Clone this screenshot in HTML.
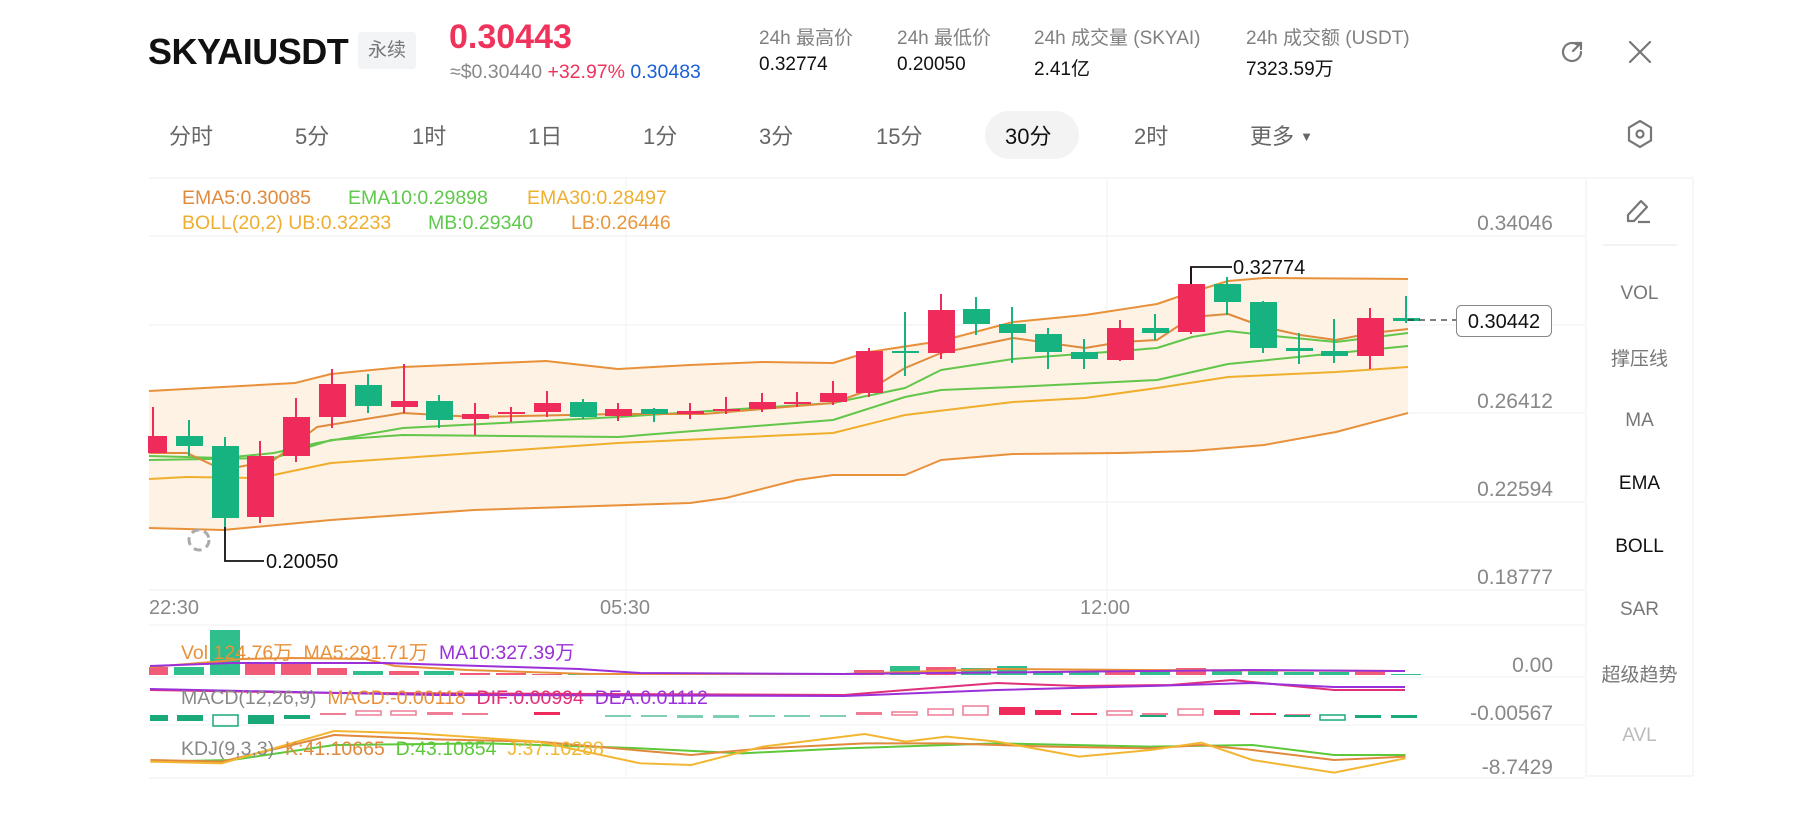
<!DOCTYPE html>
<html><head><meta charset="utf-8"><style>
*{margin:0;padding:0;box-sizing:border-box}
body{width:1796px;height:828px;background:#fff;position:relative;overflow:hidden;font-family:"Liberation Sans","Noto Sans CJK SC",sans-serif;color:#111}
.a{position:absolute;white-space:nowrap}
.lab{font-size:19px;color:#808080}
.val{font-size:19px;color:#111}
.tab{font-size:22px;color:#666;top:119px}
.rp{left:1586px;width:107px;text-align:center;font-size:19px;color:#777}
.ax{right:243px;font-size:21px;color:#888;text-align:right}
.lg{font-size:19.5px}
</style></head><body>
<div class="a" style="left:148px;top:31px;font-size:36px;font-weight:bold;letter-spacing:-0.5px">SKYAIUSDT</div>
<div class="a" style="left:358px;top:32px;width:58px;height:37px;background:#f3f4f6;border-radius:3px;font-size:19px;color:#777;text-align:center;line-height:37px">永续</div>
<div class="a" style="left:449px;top:18px;font-size:34px;font-weight:bold;color:#f0335c">0.30443</div>
<div class="a" style="left:450px;top:61px;font-size:19.5px;color:#888">≈$0.30440 <span style="color:#f0335c">+32.97%</span> <span style="color:#1a5ed8">0.30483</span></div>
<div class="a lab" style="left:759px;top:23px">24h 最高价</div><div class="a val" style="left:759px;top:54px">0.32774</div>
<div class="a lab" style="left:897px;top:23px">24h 最低价</div><div class="a val" style="left:897px;top:54px">0.20050</div>
<div class="a lab" style="left:1034px;top:23px">24h 成交量 (SKYAI)</div><div class="a val" style="left:1034px;top:54px">2.41亿</div>
<div class="a lab" style="left:1246px;top:23px">24h 成交额 (USDT)</div><div class="a val" style="left:1246px;top:54px">7323.59万</div>
<svg class="a" style="left:1558px;top:38px" width="28" height="28" viewBox="0 0 28 28" fill="none" stroke="#777" stroke-width="2.2" stroke-linecap="round"><path d="M23 14a9 9 0 1 1-4-7.5"/><path d="M15 13l8-8M17 5h6v6"/></svg>
<svg class="a" style="left:1627px;top:39px" width="26" height="26" viewBox="0 0 26 26" stroke="#777" stroke-width="2.2" stroke-linecap="round"><path d="M3 3l20 20M23 3L3 23"/></svg>
<div class="a tab" style="left:169px">分时</div>
<div class="a tab" style="left:295px">5分</div>
<div class="a tab" style="left:412px">1时</div>
<div class="a tab" style="left:528px">1日</div>
<div class="a tab" style="left:643px">1分</div>
<div class="a tab" style="left:759px">3分</div>
<div class="a tab" style="left:876px">15分</div>
<div class="a" style="left:985px;top:111px;width:94px;height:48px;background:#f3f3f3;border-radius:24px"></div>
<div class="a tab" style="left:1005px;color:#111">30分</div>
<div class="a tab" style="left:1134px">2时</div>
<div class="a tab" style="left:1250px">更多 <span style="font-size:13px;vertical-align:3px">▼</span></div>
<svg class="a" style="left:1624px;top:118px" width="32" height="34" viewBox="0 0 32 34" fill="none" stroke="#777" stroke-width="2.2"><path d="M16 3l11 6.5v13L16 29 5 22.5v-13z"/><circle cx="16" cy="16" r="3.5"/></svg>

<svg class="a" style="left:0;top:0" width="1796" height="828">
<g stroke="#f2f2f2" stroke-width="1.2">
<line x1="149" y1="178" x2="1585" y2="178"/>
<line x1="149" y1="236" x2="1585" y2="236"/><line x1="149" y1="325" x2="1585" y2="325"/><line x1="149" y1="413" x2="1585" y2="413"/><line x1="149" y1="502" x2="1585" y2="502"/><line x1="149" y1="590" x2="1585" y2="590"/>
<line x1="149" y1="625" x2="1585" y2="625"/><line x1="149" y1="677" x2="1585" y2="677"/><line x1="149" y1="725" x2="1585" y2="725"/><line x1="149" y1="778" x2="1585" y2="778"/>
<line x1="626" y1="178" x2="626" y2="778"/><line x1="1107" y1="178" x2="1107" y2="778"/>
</g>
<rect x="1586" y="178" width="107" height="598" fill="none" stroke="#efefef"/>
<line x1="1603" y1="245" x2="1677" y2="245" stroke="#eee" stroke-width="1.5"/>
<polygon fill="#fdf2e4" points="149,391 295,383 331,374 403,367 546,361 618,369 690,365 762,362 833,363 869,352 941,341 1013,322 1085,315 1157,304 1192,292 1228,281 1264,278 1408,279 1408,413 1336,432 1264,445 1192,451 1120,453 1013,454 941,460 905,475 833,475 797,480 726,498 690,503 474,510 331,520 223,530 149,528"/>
<g fill="none" stroke-width="2" stroke-linejoin="round">
<polyline stroke="#e8913a" points="149,391 295,383 331,374 403,367 546,361 618,369 690,365 762,362 833,363 869,352 941,341 1013,322 1085,315 1157,304 1192,292 1228,281 1264,278 1408,279"/>
<polyline stroke="#e8913a" points="149,528 223,530 331,520 474,510 690,503 726,498 797,480 833,475 905,475 941,460 1013,454 1120,453 1192,451 1264,445 1336,432 1408,413"/>
<polyline stroke="#f0ae2c" points="149,479 187,477 259,478 331,463 474,453 618,443 833,433 905,415 1013,402 1085,398 1157,388 1228,377 1336,372 1408,367"/>
<polyline stroke="#62c64a" points="149,460 274,458 331,440 403,435 618,437 833,420 905,397 941,390 1013,387 1157,380 1228,364 1408,346"/>
<polyline stroke="#62c64a" points="149,456 223,458 274,453 317,443 403,428 618,417 833,403 905,388 941,370 1013,359 1121,351 1157,348 1192,337 1228,331 1264,335 1336,342 1408,333"/>
<polyline stroke="#e08a3c" points="149,453 187,453 223,470 274,460 317,427 403,413 474,417 618,414 704,414 833,403 869,390 905,368 941,353 1013,338 1085,348 1121,342 1157,340 1192,317 1228,314 1264,327 1300,335 1336,340 1372,333 1408,329"/>
</g>
<g stroke-width="2">
<g stroke="#ef2b5b" fill="#ef2b5b">
<line x1="153" y1="407" x2="153" y2="452"/><rect x="149" y="437" width="17" height="15"/>
<line x1="260" y1="441" x2="260" y2="523"/><rect x="247" y="456" width="27" height="61" stroke="none"/>
<line x1="296" y1="398" x2="296" y2="462"/><rect x="283" y="417" width="27" height="39" stroke="none"/>
<line x1="332" y1="369" x2="332" y2="428"/><rect x="319" y="384" width="27" height="33" stroke="none"/>
<line x1="404" y1="364" x2="404" y2="413"/><rect x="391" y="401" width="27" height="6" stroke="none"/>
<line x1="475" y1="403" x2="475" y2="435"/><rect x="462" y="414" width="27" height="5" stroke="none"/>
<line x1="511" y1="407" x2="511" y2="422"/><rect x="498" y="412" width="27" height="2" stroke="none"/>
<line x1="547" y1="391" x2="547" y2="417"/><rect x="534" y="403" width="27" height="9" stroke="none"/>
<line x1="618" y1="403" x2="618" y2="421"/><rect x="605" y="409" width="27" height="7" stroke="none"/>
<line x1="690" y1="403" x2="690" y2="419"/><rect x="677" y="411" width="27" height="3" stroke="none"/>
<line x1="726" y1="397" x2="726" y2="414"/><rect x="713" y="409" width="27" height="2" stroke="none"/>
<line x1="762" y1="393" x2="762" y2="412"/><rect x="749" y="402" width="27" height="7" stroke="none"/>
<line x1="797" y1="392" x2="797" y2="407"/><rect x="784" y="402" width="27" height="2" stroke="none"/>
<line x1="833" y1="381" x2="833" y2="405"/><rect x="820" y="393" width="27" height="9" stroke="none"/>
<line x1="869" y1="348" x2="869" y2="397"/><rect x="856" y="351" width="27" height="42" stroke="none"/>
<line x1="941" y1="294" x2="941" y2="359"/><rect x="928" y="310" width="27" height="43" stroke="none"/>
<line x1="1120" y1="320" x2="1120" y2="361"/><rect x="1107" y="328" width="27" height="32" stroke="none"/>
<line x1="1191" y1="267" x2="1191" y2="334"/><rect x="1178" y="284" width="27" height="48" stroke="none"/>
<line x1="1370" y1="308" x2="1370" y2="369"/><rect x="1357" y="318" width="27" height="38" stroke="none"/>
</g>
<g stroke="#16b27f" fill="#16b27f">
<line x1="189" y1="420" x2="189" y2="456"/><rect x="176" y="436" width="27" height="10" stroke="none"/>
<line x1="225" y1="437" x2="225" y2="527"/><rect x="212" y="446" width="27" height="72" stroke="none"/>
<line x1="368" y1="374" x2="368" y2="413"/><rect x="355" y="385" width="27" height="21" stroke="none"/>
<line x1="439" y1="395" x2="439" y2="428"/><rect x="426" y="401" width="27" height="19" stroke="none"/>
<line x1="583" y1="399" x2="583" y2="419"/><rect x="570" y="402" width="27" height="15" stroke="none"/>
<line x1="654" y1="408" x2="654" y2="422"/><rect x="641" y="409" width="27" height="5" stroke="none"/>
<line x1="905" y1="312" x2="905" y2="376"/><rect x="892" y="351" width="27" height="2" stroke="none"/>
<line x1="976" y1="297" x2="976" y2="335"/><rect x="963" y="309" width="27" height="15" stroke="none"/>
<line x1="1012" y1="307" x2="1012" y2="363"/><rect x="999" y="324" width="27" height="9" stroke="none"/>
<line x1="1048" y1="328" x2="1048" y2="369"/><rect x="1035" y="334" width="27" height="18" stroke="none"/>
<line x1="1084" y1="339" x2="1084" y2="369"/><rect x="1071" y="352" width="27" height="7" stroke="none"/>
<line x1="1155" y1="314" x2="1155" y2="340"/><rect x="1142" y="328" width="27" height="5" stroke="none"/>
<line x1="1227" y1="277" x2="1227" y2="315"/><rect x="1214" y="284" width="27" height="18" stroke="none"/>
<line x1="1263" y1="301" x2="1263" y2="353"/><rect x="1250" y="302" width="27" height="46" stroke="none"/>
<line x1="1299" y1="333" x2="1299" y2="364"/><rect x="1286" y="348" width="27" height="3" stroke="none"/>
<line x1="1334" y1="319" x2="1334" y2="363"/><rect x="1321" y="351" width="27" height="5" stroke="none"/>
<line x1="1406" y1="296" x2="1406" y2="323"/><rect x="1393" y="318" width="27" height="3" stroke="none"/>
</g>
</g>
<polyline points="225,527 225,561 264,561" fill="none" stroke="#111" stroke-width="1.8"/>
<text x="266" y="568" font-size="20" fill="#111" font-family="Liberation Sans">0.20050</text>
<polyline points="1191,284 1191,267 1232,267" fill="none" stroke="#111" stroke-width="1.8"/>
<text x="1233" y="274" font-size="20" fill="#111" font-family="Liberation Sans">0.32774</text>
<line x1="1408" y1="320" x2="1456" y2="320" stroke="#333" stroke-width="1.2" stroke-dasharray="6,5"/>
<rect x="1456.5" y="305.5" width="95" height="31" rx="5" fill="#fff" stroke="#888"/>
<text x="1504" y="328" font-size="20" fill="#111" text-anchor="middle" font-family="Liberation Sans">0.30442</text>
<circle cx="199" cy="540" r="10" fill="none" stroke="#aaa" stroke-width="3" stroke-dasharray="8,5"/>
<g>
<g fill="#f25b77">
<rect x="149" y="667" width="19" height="8"/><rect x="245" y="663" width="30" height="12"/><rect x="281" y="663" width="30" height="12"/><rect x="317" y="668" width="30" height="7"/><rect x="389" y="671" width="30" height="4"/><rect x="460" y="673" width="30" height="2"/><rect x="496" y="673" width="30" height="2"/><rect x="532" y="674" width="30" height="1"/><rect x="854" y="670" width="30" height="5"/><rect x="926" y="667" width="30" height="8"/><rect x="1105" y="672" width="30" height="3"/><rect x="1176" y="668" width="30" height="7"/><rect x="1355" y="671" width="30" height="4"/>
</g>
<g fill="#2fbf8c">
<rect x="174" y="667" width="30" height="8"/><rect x="210" y="630" width="30" height="45"/><rect x="353" y="671" width="30" height="4"/><rect x="424" y="671" width="30" height="4"/><rect x="568" y="674" width="30" height="1"/><rect x="890" y="666" width="30" height="9"/><rect x="961" y="668" width="30" height="7"/><rect x="997" y="666" width="30" height="9"/><rect x="1033" y="671" width="30" height="4"/><rect x="1069" y="672" width="30" height="3"/><rect x="1140" y="671" width="30" height="4"/><rect x="1212" y="671" width="30" height="4"/><rect x="1248" y="671" width="30" height="4"/><rect x="1284" y="672" width="30" height="3"/><rect x="1319" y="672" width="30" height="3"/><rect x="1391" y="674" width="30" height="1"/>
</g>
<polyline fill="none" stroke="#e8913a" stroke-width="2" points="150,667 212,662 242,659 293,658 365,659 395,666 467,670 589,674 844,674 997,669 1150,670 1405,671"/>
<polyline fill="none" stroke="#9b30d9" stroke-width="2" points="150,666 232,663 385,663 579,669 640,673 844,674 1048,672 1252,670 1405,671"/>
</g>
<g stroke-width="1.5">
<g fill="#1aa97a"><rect x="150" y="715" width="18" height="6"/><rect x="177" y="715" width="26" height="6"/><rect x="248" y="715" width="26" height="9"/><rect x="284" y="715" width="26" height="4"/><rect x="1140" y="715" width="26" height="2"/><rect x="1391" y="715" width="26" height="3"/><rect x="1355" y="715" width="26" height="3"/><rect x="1284" y="715" width="26" height="2"/></g>
<g fill="#7fcfb3"><rect x="605" y="715" width="26" height="2"/><rect x="641" y="715" width="26" height="2"/><rect x="677" y="715" width="26" height="3"/><rect x="713" y="715" width="26" height="3"/><rect x="749" y="715" width="26" height="2"/><rect x="784" y="715" width="26" height="2"/><rect x="820" y="715" width="26" height="2"/></g>
<rect x="213" y="715" width="25" height="11" fill="none" stroke="#1aa97a"/>
<rect x="1320" y="715" width="25" height="5" fill="none" stroke="#1aa97a"/>
<g fill="#f07c96"><rect x="320" y="713" width="26" height="2"/><rect x="427" y="712" width="26" height="3"/><rect x="462" y="713" width="26" height="2"/><rect x="856" y="712" width="26" height="3"/><rect x="1142" y="713" width="26" height="2"/><rect x="1285" y="714" width="26" height="1"/></g>
<g fill="#ef2b5b"><rect x="534" y="712" width="26" height="3"/><rect x="999" y="707" width="26" height="8"/><rect x="1035" y="710" width="26" height="5"/><rect x="1071" y="713" width="26" height="2"/><rect x="1214" y="710" width="26" height="5"/><rect x="1250" y="713" width="26" height="2"/></g>
<g fill="none" stroke="#f07c96"><rect x="356" y="711" width="25" height="4"/><rect x="391" y="711" width="25" height="4"/><rect x="892" y="712" width="25" height="3"/><rect x="928" y="709" width="25" height="6"/><rect x="963" y="706" width="25" height="9"/><rect x="1107" y="711" width="25" height="4"/><rect x="1178" y="709" width="25" height="6"/></g>
</g>
<polyline fill="none" stroke="#e0307a" stroke-width="2" points="150,690 334,693 844,695 906,690 997,683 1079,686 1171,685 1232,680 1334,690 1405,690"/>
<polyline fill="none" stroke="#9b30d9" stroke-width="2" points="150,689 436,695 844,696 997,690 1150,686 1252,683 1334,687 1405,687"/>
<g transform="translate(130,580) scale(1.0204,0.3333)" fill="none" stroke-width="2">
<polyline vector-effect="non-scaling-stroke" stroke="#5cc83a" points="20,545 100,540 200,495 350,490 500,505 600,520 700,505 850,490 1000,500 1100,495 1180,525 1250,525"/>
<polyline vector-effect="non-scaling-stroke" stroke="#e0893c" points="20,540 90,545 200,465 300,478 400,485 550,525 620,505 720,490 800,490 900,500 1000,505 1050,495 1100,510 1180,540 1250,530"/>
<polyline vector-effect="non-scaling-stroke" stroke="#f2b632" points="20,545 90,550 200,453 280,460 400,485 500,550 550,555 620,500 720,462 760,485 800,470 850,485 930,530 1000,510 1050,488 1100,540 1180,578 1250,535"/>
</g>
</svg>

<div class="a lg" style="left:182px;top:187px;color:#e08a3c">EMA5:0.30085</div>
<div class="a lg" style="left:348px;top:187px;color:#5ec94a">EMA10:0.29898</div>
<div class="a lg" style="left:527px;top:187px;color:#eeae2e">EMA30:0.28497</div>
<div class="a lg" style="left:182px;top:212px;color:#eeae2e">BOLL(20,2) UB:0.32233</div>
<div class="a lg" style="left:428px;top:212px;color:#5ec94a">MB:0.29340</div>
<div class="a lg" style="left:571px;top:212px;color:#e8953b">LB:0.26446</div>

<div class="a ax" style="top:212px">0.34046</div>
<div class="a ax" style="top:390px">0.26412</div>
<div class="a ax" style="top:478px">0.22594</div>
<div class="a ax" style="top:566px">0.18777</div>
<div class="a" style="left:149px;top:597px;font-size:20px;color:#888">22:30</div>
<div class="a" style="left:600px;top:597px;font-size:20px;color:#888">05:30</div>
<div class="a" style="left:1080px;top:597px;font-size:20px;color:#888">12:00</div>
<div class="a ax" style="top:654px">0.00</div>
<div class="a ax" style="top:702px">-0.00567</div>
<div class="a ax" style="top:756px">-8.7429</div>

<div class="a lg" style="left:181px;top:636px;color:#e8913a">Vol 124.76万 &nbsp;MA5:291.71万 &nbsp;<span style="color:#9b30d9">MA10:327.39万</span></div>
<div class="a lg" style="left:181px;top:687px;color:#888">MACD(12,26,9) &nbsp;<span style="color:#e8913a">MACD:-0.00118</span> &nbsp;<span style="color:#e0307a">DIF:0.00994</span> &nbsp;<span style="color:#9b30d9">DEA:0.01112</span></div>
<div class="a lg" style="left:181px;top:738px;color:#888">KDJ(9,3,3) &nbsp;<span style="color:#e0893c">K:41.10665</span> &nbsp;<span style="color:#5cc83a">D:43.10854</span> &nbsp;<span style="color:#f2b632">J:37.10288</span></div>

<svg class="a" style="left:1624px;top:196px" width="32" height="30" viewBox="0 0 32 30" fill="none" stroke="#777" stroke-width="2.2" stroke-linejoin="round"><path d="M4 25V19L17 5l6 6L10 25z"/><path d="M14 26h12"/></svg>
<div class="a rp" style="top:283px">VOL</div>
<div class="a rp" style="top:344px">撑压线</div>
<div class="a rp" style="top:410px">MA</div>
<div class="a rp" style="top:473px;color:#111">EMA</div>
<div class="a rp" style="top:536px;color:#111">BOLL</div>
<div class="a rp" style="top:599px">SAR</div>
<div class="a rp" style="top:660px">超级趋势</div>
<div class="a rp" style="top:725px;color:#bbb">AVL</div>
</body></html>
